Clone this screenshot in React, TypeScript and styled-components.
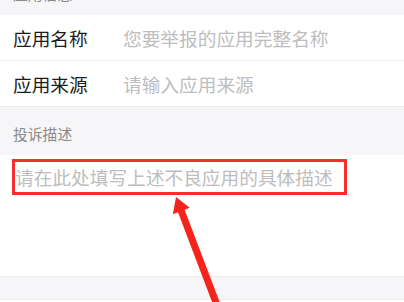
import React from "react";
import styled, { createGlobalStyle } from "styled-components";

const Global = createGlobalStyle`
  html, body {
    margin: 0;
    padding: 0;
    background: #f6f6f8;
    overflow: hidden;
  }
  body {
    font-family: "Noto Sans CJK SC", "Noto Sans", sans-serif;
  }
`;

const Page = styled.div`
  position: relative;
  margin-top: -33px;
  width: 404px;
`;

const SectionHeader = styled.div`
  height: 48px;
  box-sizing: border-box;
  padding: 17px 0 0 13px;
  font-size: 14.8px;
  line-height: 20px;
  color: #8a8a8a;
  background: #f6f6f8;
`;

const Row = styled.div`
  display: flex;
  align-items: center;
  height: 45px;
  background: #fff;
  border-bottom: 1px solid #ececee;
  font-size: 18.7px;
`;

const Label = styled.span`
  width: 110px;
  padding-left: 13px;
  color: #1b1b1b;
  flex-shrink: 0;
`;

const Placeholder = styled.span`
  color: #bdbdbd;
`;

const DescBox = styled.div`
  height: 122px;
  box-sizing: border-box;
  padding: 4px 0 0 12px;
  background: #fff;
  border-bottom: 1px solid #ececee;
`;

const Marked = styled.span`
  display: inline-block;
  border: 3px solid #f3302b;
  padding: 0 11px 0 0;
  font-size: 18.7px;
  line-height: 30px;
  color: #bdbdbd;
`;

const Gap = styled.div`
  height: 22px;
  background: #f6f6f8;
`;

const NextRow = styled.div`
  height: 40px;
  background: #fff;
  border-top: 1px solid #ececee;
`;

const Arrow = styled.svg`
  position: absolute;
  left: 0;
  top: 33px;
  pointer-events: none;
`;

export default function App() {
  return (
    <>
      <Global />
      <Page>
        <SectionHeader>应用信息</SectionHeader>
        <Row>
          <Label>应用名称</Label>
          <Placeholder>您要举报的应用完整名称</Placeholder>
        </Row>
        <Row>
          <Label>应用来源</Label>
          <Placeholder>请输入应用来源</Placeholder>
        </Row>
        <SectionHeader>投诉描述</SectionHeader>
        <DescBox>
          <Marked>请在此处填写上述不良应用的具体描述</Marked>
        </DescBox>
        <Gap />
        <NextRow />
        <Arrow width="404" height="320" viewBox="0 0 404 320">
          <polygon
            fill="#f5231b"
            points="176,197 189.7,207.8 184.6,209.8 220.3,303.8 213.7,306.2 178,212.2 172.9,214.2"
          />
        </Arrow>
      </Page>
    </>
  );
}
